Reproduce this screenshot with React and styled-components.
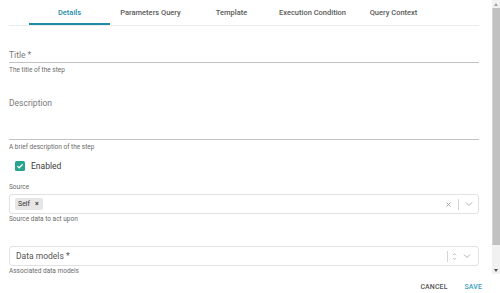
import React from "react";
import styled, { createGlobalStyle } from "styled-components";

const Global = createGlobalStyle`
  html, body { margin: 0; padding: 0; background: #fff; }
  body { font-family: Roboto, "Noto Sans", Arial, sans-serif; overflow: hidden; }
  * { box-sizing: border-box; }
`;

const Page = styled.div`
  width: 500px;
  height: 293px;
  display: flex;
  flex-direction: column;
  background: #fff;
`;

const ScrollArea = styled.div`
  height: 274px;
  flex: none;
  display: flex;
  overflow: hidden;
`;

const Content = styled.div`
  flex: 1;
  min-width: 0;
  padding: 0 13px 22px 9px;
`;

const ScrollBar = styled.div`
  width: 8px;
  flex: none;
  display: flex;
  flex-direction: column;
  background: #f1f1f1;
`;

const ScrollBtn = styled.div`
  height: 8px;
  flex: none;
  display: flex;
  align-items: center;
  justify-content: center;
`;

const Thumb = styled.div`
  height: 237px;
  flex: none;
  background: #c1c1c1;
  border-left: 1px solid #d4d4d4;
`;

const TrackRest = styled.div`
  flex: 1;
`;

const TabBar = styled.div`
  display: flex;
  height: 26px;
  padding-left: 20px;
  border-bottom: 1px solid #ececec;
`;

const Tab = styled.div`
  width: 81px;
  height: 25px;
  display: flex;
  align-items: center;
  justify-content: center;
  padding-bottom: 1px;
  font-size: 7.5px;
  font-weight: 500;
  color: ${(p) => (p.$active ? "#1d8ea6" : "#5a5a5a")};
  box-shadow: ${(p) => (p.$active ? "inset 0 -2px 0 #1d8ea6" : "none")};
`;

const TextField = styled.div`
  margin-top: ${(p) => p.$mt}px;
  border-bottom: 1px solid #c2c2c2;
  padding-bottom: ${(p) => p.$area}px;
`;

const FloatLabel = styled.div`
  font-size: 8.5px;
  line-height: 12px;
  height: 12px;
  color: #7a7a7a;
`;

const Helper = styled.div`
  margin-top: ${(p) => p.$mt ?? 3}px;
  font-size: 6.5px;
  line-height: 9px;
  color: #6a6a6a;
`;

const CheckRow = styled.label`
  margin-top: 8px;
  display: flex;
  align-items: center;
  gap: 6px;
  height: 12px;
  padding-left: 6px;
  font-size: 8.5px;
  color: #3a3a3a;
`;

const Box = styled.span`
  width: 10px;
  height: 10px;
  border-radius: 1.5px;
  background: #27a48e;
  display: flex;
  align-items: center;
  justify-content: center;
`;

const SmallLabel = styled.div`
  margin-top: 11px;
  font-size: 6.5px;
  line-height: 9px;
  color: #6a6a6a;
`;

const Select = styled.div`
  margin-top: ${(p) => p.$mt}px;
  height: 20px;
  border: 1px solid #e2e2e2;
  border-radius: 3px;
  display: flex;
  align-items: center;
  padding-left: ${(p) => p.$pl}px;
  padding-right: 5px;
`;

const Chip = styled.span`
  display: flex;
  align-items: center;
  gap: 5px;
  height: 12px;
  padding: 0 4px 0 3px;
  background: #e6e6e6;
  border-radius: 2px;
  font-size: 7px;
  color: #333;
`;

const ChipX = styled.span`
  font-size: 7px;
  font-weight: 700;
  color: #444;
`;

const Placeholder = styled.span`
  font-size: 8.5px;
  color: #555;
`;

const Indicators = styled.div`
  margin-left: auto;
  display: flex;
  align-items: center;
  gap: ${(p) => p.$gap}px;
  height: 100%;
`;

const Sep = styled.span`
  width: 1px;
  height: 11px;
  background: #d5d5d5;
`;

const Footer = styled.div`
  flex: 1;
  display: flex;
  justify-content: flex-end;
  align-items: flex-start;
  gap: 17px;
  padding: 9px 18px 0 0;
`;

const Btn = styled.span`
  font-size: 7px;
  font-weight: 500;
  line-height: 9px;
  letter-spacing: 0.1px;
  color: ${(p) => (p.$primary ? "#3a9fc2" : "#555")};
`;

const Icon = ({ children, w = 7, h = 7 }) => (
  <svg width={w} height={h} viewBox={`0 0 ${w} ${h}`} fill="none">
    {children}
  </svg>
);

export default function App() {
  const tabs = ["Details", "Parameters Query", "Template", "Execution Condition", "Query Context"];
  return (
    <Page>
      <Global />
      <ScrollArea>
        <Content>
          <TabBar>
            {tabs.map((t, i) => (
              <Tab key={t} $active={i === 0}>{t}</Tab>
            ))}
          </TabBar>

          <TextField $mt={23} $area={1}>
            <FloatLabel>Title *</FloatLabel>
          </TextField>
          <Helper>The title of the step</Helper>

          <TextField $mt={22} $area={30}>
            <FloatLabel>Description</FloatLabel>
          </TextField>
          <Helper>A brief description of the step</Helper>

          <CheckRow>
            <Box>
              <svg width="8" height="8" viewBox="0 0 8 8">
                <path d="M1.4 4.1 L3.2 5.8 L6.7 2.2" stroke="#fff" strokeWidth="1.3" fill="none" />
              </svg>
            </Box>
            Enabled
          </CheckRow>

          <SmallLabel>Source</SmallLabel>
          <Select $mt={2} $pl={5}>
            <Chip>
              Self <ChipX>×</ChipX>
            </Chip>
            <Indicators $gap={6}>
              <Icon w={7} h={7}>
                <path d="M1.5 1.5 L5.5 5.5 M5.5 1.5 L1.5 5.5" stroke="#9a9a9a" strokeWidth="0.9" />
              </Icon>
              <Sep />
              <Icon w={8} h={6}>
                <path d="M1 1.5 L4 4.5 L7 1.5" stroke="#a5a5a5" strokeWidth="0.9" />
              </Icon>
            </Indicators>
          </Select>
          <Helper $mt={1}>Source data to act upon</Helper>

          <Select $mt={22} $pl={6}>
            <Placeholder>Data models *</Placeholder>
            <Indicators $gap={4}>
              <Sep />
              <Icon w={5} h={9}>
                <path d="M1 3.2 L2.5 1.5 L4 3.2 M1 5.8 L2.5 7.5 L4 5.8" stroke="#b0b0b0" strokeWidth="0.8" />
              </Icon>
              <Icon w={12} h={6}>
                <path d="M3 1.5 L6 4.5 L9 1.5" stroke="#a5a5a5" strokeWidth="0.9" />
              </Icon>
            </Indicators>
          </Select>
          <Helper $mt={1}>Associated data models</Helper>
        </Content>
        <ScrollBar>
          <ScrollBtn>
            <svg width="4" height="3" viewBox="0 0 4 3"><path d="M0 3 L2 0 L4 3 Z" fill="#a3a3a3" /></svg>
          </ScrollBtn>
          <Thumb />
          <TrackRest />
          <ScrollBtn>
            <svg width="4" height="3" viewBox="0 0 4 3"><path d="M0 0 L4 0 L2 3 Z" fill="#505050" /></svg>
          </ScrollBtn>
        </ScrollBar>
      </ScrollArea>
      <Footer>
        <Btn>CANCEL</Btn>
        <Btn $primary>SAVE</Btn>
      </Footer>
    </Page>
  );
}
